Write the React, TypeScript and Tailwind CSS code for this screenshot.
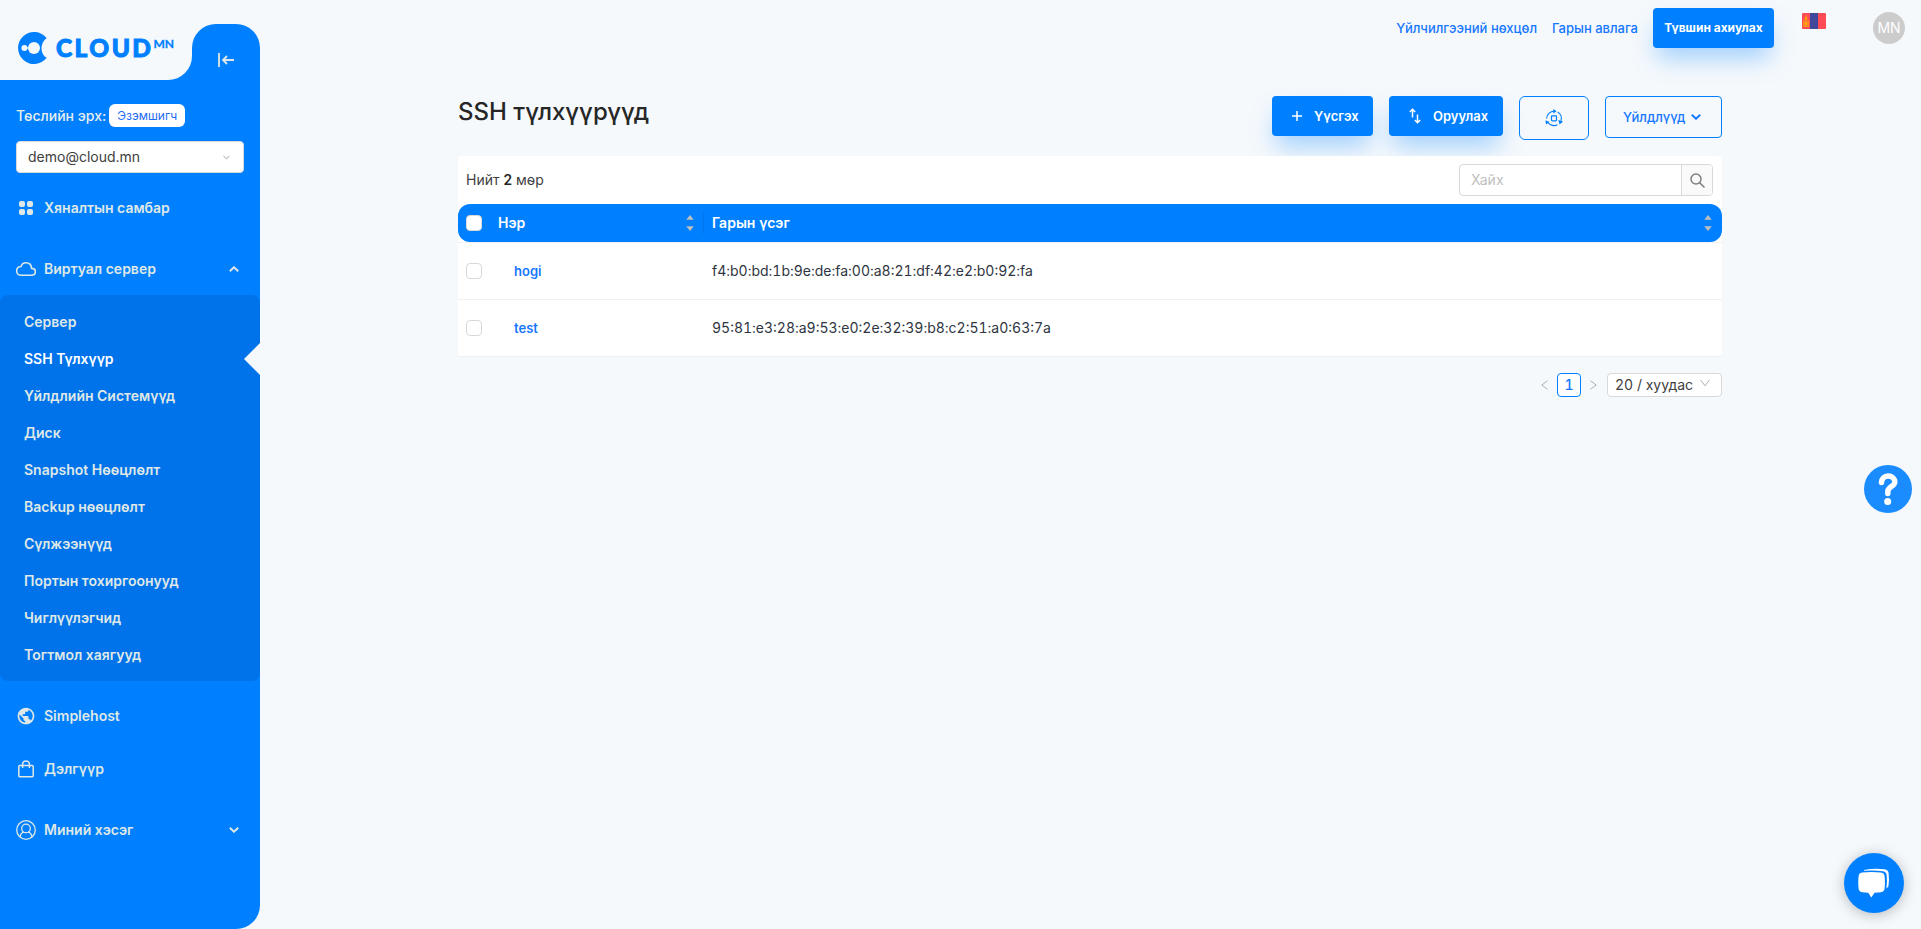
import React from 'react';
import { IoCloudOutline } from 'react-icons/io5';
import { MdPublic } from 'react-icons/md';

const INTER = "font-['Inter','Noto_Sans',sans-serif]";

function Logo() {
  return (
    <div className="flex h-8 items-center text-[#0080ff]">
      <svg width="30" height="32" viewBox="0 0 30 32" fill="none">
        <path
          d="M28.7 6.2A16 16 0 1 0 28.7 25.8L27 24.800A12.500 12.500 0 0 1 27 7.500Z"
          fill="#0080ff"
        />
        <circle cx="16" cy="16" r="6" fill="#f5f9fc" />
        <circle cx="6.4" cy="16" r="3" fill="#f5f9fc" />
        <path d="M6 16H14" stroke="#f5f9fc" strokeWidth="1.3" />
      </svg>
      <svg className="ml-[7px]" width="120" height="32" viewBox="0 0 120 32" fill="#0080ff" stroke="#0080ff">
        <text x="1" y="24.600" strokeWidth="1" fontFamily="Lato, sans-serif" fontWeight="900" fontSize="24.500" textLength="95" lengthAdjust="spacing">CLOUD</text>
        <text x="98.500" y="15.500" strokeWidth=".3" fontFamily="Lato, sans-serif" fontWeight="700" fontSize="12" textLength="20.500" lengthAdjust="spacing">MN</text>
      </svg>
    </div>
  );
}

function Chevron({ up = false, className = '' }: { up?: boolean; className?: string }) {
  return (
    <svg className={className} width="10" height="6" viewBox="0 0 10 6" fill="none" stroke="currentColor" strokeWidth="1.9">
      <path d={up ? 'M.8 5.2 5 1.2 9.2 5.2' : 'M.8.8 5 4.8 9.2.8'} />
    </svg>
  );
}

const GridIcon = () => (
  <svg width="14" height="14" viewBox="0 0 14 14" fill="currentColor">
    <rect width="6" height="6" rx="2" />
    <rect x="8" width="6" height="6" rx="2" />
    <rect y="8" width="6" height="6" rx="2" />
    <rect x="8" y="8" width="6" height="6" rx="2" />
  </svg>
);

const BagIcon = () => (
  <svg width="16" height="18" viewBox="0 0 16 18" fill="none" stroke="currentColor" strokeWidth="1.5">
    <rect x=".8" y="5.6" width="14.4" height="11.2" rx="1" />
    <path d="M4.6 8V4.3a3.4 3.4 0 0 1 6.8 0V8" />
  </svg>
);

const UserIcon = () => (
  <svg width="20" height="20" viewBox="0 0 20 20" fill="none" stroke="currentColor" strokeWidth="1.3">
    <circle cx="10" cy="10" r="9.3" />
    <circle cx="10" cy="8.4" r="4.3" />
    <path d="M4 17c.5-2.700 2-4.500 4-5.100M16 17c-.5-2.700-2-4.500-4-5.100" />
  </svg>
);

const subItems = [
  'Сервер',
  'SSH Түлхүүр',
  'Үйлдлийн Системүүд',
  'Диск',
  'Snapshot Нөөцлөлт',
  'Backup нөөцлөлт',
  'Сүлжээнүүд',
  'Портын тохиргоонууд',
  'Чиглүүлэгчид',
  'Тогтмол хаягууд',
];

function MenuItem({ icon, label, chevron }: { icon: React.ReactNode; label: string; chevron?: 'up' | 'down' }) {
  return (
    <div className="flex h-[53px] items-center pl-4 pr-[21px] text-sm font-semibold text-[#dfe8e6]">
      <span className="flex w-5 justify-center">{icon}</span>
      <span className="ml-2 flex-1">{label}</span>
      {chevron && <Chevron up={chevron === 'up'} />}
    </div>
  );
}

function Sidebar() {
  return (
    <aside className="flex h-[929px] w-[260px] shrink-0 flex-col overflow-hidden rounded-br-3xl">
      <div className="flex h-20 bg-[linear-gradient(to_bottom,#f5f9fc_50%,#0080ff_50%)]">
        <div className="flex w-48 items-start rounded-br-3xl bg-[#f5f9fc] pl-[18px] pt-8">
          <Logo />
        </div>
        <div className="flex flex-1 bg-[#f5f9fc] pt-6">
          <div className="flex flex-1 justify-center rounded-t-3xl bg-[#0080ff] pt-[29px]">
            <svg width="16" height="14" viewBox="0 0 16 14" fill="none" stroke="#dfe8e6" strokeWidth="1.8">
              <path d="M1 0V14M16 7H5M9 3 5 7l4 4" />
            </svg>
          </div>
        </div>
      </div>
      <div className="flex flex-1 flex-col bg-[#0080ff]">
        <div className="mt-6 flex h-[23px] items-center pl-4 text-sm font-medium text-[#e6efee]">
          <span>Төслийн эрх:</span>
          <span className="ml-[3px] flex h-[23px] w-[76px] items-center justify-center rounded-md bg-white text-xs font-normal text-[#1f6df5]">
            Эзэмшигч
          </span>
        </div>
        <div className="mx-4 mt-3.5 flex h-8 items-center justify-between rounded border border-[#d9d9d9] bg-white pl-[11px] pr-[13px] text-sm text-[#404040]">
          <span>demo@cloud.mn</span>
          <svg width="7" height="5" viewBox="0 0 7 5" fill="none" stroke="#bfbfbf" strokeWidth="1.1">
            <path d="M.5.8l3 3 3-3" />
          </svg>
        </div>
        <div className="mt-2">
          <MenuItem icon={<GridIcon />} label="Хяналтын самбар" />
          <div className="mt-2">
            <MenuItem icon={<IoCloudOutline size={20} className="[&_path]:[stroke-width:42px]" />} label="Виртуал сервер" chevron="up" />
          </div>
        </div>
        <div className="flex h-[386px] flex-col rounded-lg bg-[#0073eb] pt-2">
          {subItems.map((t) => {
            const active = t === 'SSH Түлхүүр';
            return (
              <div
                key={t}
                className={`flex h-[37px] items-center justify-between pl-6 text-sm font-semibold ${active ? 'text-white' : 'text-[#dfe8e6]'}`}
              >
                {t}
                {active && (
                  <svg width="16" height="32" viewBox="0 0 16 32" fill="#f5f9fc">
                    <path d="M16 0V32L0 16Z" />
                  </svg>
                )}
              </div>
            );
          })}
        </div>
        <div className="mt-2">
          <MenuItem icon={<MdPublic size={20} />} label="Simplehost" />
          <MenuItem icon={<BagIcon />} label="Дэлгүүр" />
          <div className="mt-2">
            <MenuItem icon={<UserIcon />} label="Миний хэсэг" chevron="down" />
          </div>
        </div>
      </div>
    </aside>
  );
}

function Header() {
  return (
    <header className="flex h-14 items-start justify-end pr-4 text-[13px] font-medium text-[#1677ff]">
      <a className="mr-[15px] mt-[18px] leading-5">Үйлчилгээний нөхцөл</a>
      <a className="mr-[15px] mt-[18px] leading-5">Гарын авлага</a>
      <button className="mt-2 flex h-10 w-[121px] items-center justify-center rounded bg-[#0080ff] text-xs font-bold text-white shadow-[0_14px_24px_-4px_rgba(0,128,255,0.35)]">
        Түвшин ахиулах
      </button>
      <svg className="ml-7 mt-[13px]" width="24" height="16" viewBox="0 0 24 16">
        <rect width="24" height="16" rx="1" fill="#ff4b55" />
        <rect x="8" width="8" height="16" fill="#41479b" />
        <g fill="#ffb400">
          <rect x="1.300" y="7.500" width="1.200" height="6.500" />
          <rect x="5.500" y="7.500" width="1.200" height="6.500" />
          <path d="M3 7.500h2v1H3zM3 9.300h2v3H3zM3 13h2v1H3z" />
          <circle cx="4" cy="5.600" r="1.300" />
          <path d="M4 2l.8 1.700H3.200z" />
        </g>
      </svg>
      <div className="ml-[47px] mt-3 flex size-8 items-center justify-center rounded-full bg-[#ccc] text-sm font-normal text-white">MN</div>
    </header>
  );
}

function Sorter() {
  return (
    <svg width="8" height="16" viewBox="0 0 8 16" fill="#bfbfbf">
      <path d="M4 0 7.700 4.800H.3zM4 16 .3 11.200h7.400z" />
    </svg>
  );
}

const Checkbox = () => <span className="size-4 shrink-0 rounded border border-[#d9d9d9] bg-white" />;

const keys = [
  { name: 'hogi', print: 'f4:b0:bd:1b:9e:de:fa:00:a8:21:df:42:e2:b0:92:fa' },
  { name: 'test', print: '95:81:e3:28:a9:53:e0:2e:32:39:b8:c2:51:a0:63:7a' },
];

function RefreshIcon() {
  return (
    <svg width="18" height="18" viewBox="0 0 18 18" fill="none" stroke="#0080ff" strokeWidth="1.2">
      <rect x="6.500" y="6.900" width="5" height="5" rx=".8" />
      <path d="M1.600 9.500A7.400 7.400 0 0 1 9.800 2.300M12.600 3A7.400 7.400 0 0 1 16 11.800M12.500 15.800A7.400 7.400 0 0 1 3 13.500" />
      <path d="M8.300 0 11.500 2.300 8.300 4.600ZM13.300 11 18 12.500 14.600 15.500ZM1 15.500.5 11.300 4.600 13Z" fill="#0080ff" stroke="none" />
    </svg>
  );
}

function Toolbar() {
  const primary =
    'flex h-10 items-center rounded bg-[#0080ff] text-[13px] font-semibold text-white shadow-[0_14px_24px_-4px_rgba(0,128,255,0.35)]';
  return (
    <div className="flex items-start gap-4">
      <button className={`${primary} w-[101px] pl-5`}>
        <svg width="10" height="10" viewBox="0 0 10 10" stroke="#fff" strokeWidth="1.500">
          <path d="M5 0V10M0 5H10" />
        </svg>
        <span className="ml-3">Үүсгэх</span>
      </button>
      <button className={`${primary} w-[114px] pl-5`}>
        <svg width="12" height="16" viewBox="0 0 12 16" fill="none" stroke="#fff" strokeWidth="1.500">
          <path d="M3.500 9.500V1.500M.8 4l2.700-2.700L6.200 4M8.500 6.500v8M5.800 12l2.700 2.700L11.200 12" />
        </svg>
        <span className="ml-3">Оруулах</span>
      </button>
      <button className="flex h-11 w-[70px] items-center justify-center rounded-md border border-[#0080ff]">
        <RefreshIcon />
      </button>
      <button className="flex h-[42px] w-[117px] items-center rounded border border-[#0080ff] pl-[17px] text-[13px] font-medium text-[#1677ff]">
        Үйлдлүүд
        <Chevron className="ml-1.5" />
      </button>
    </div>
  );
}

function Main() {
  return (
    <main className="mt-10 ml-[198px] w-[1264px] text-sm">
      <div className="flex h-[60px] justify-between">
        <h1 className="text-2xl font-medium leading-8 text-[#262626]">SSH түлхүүрүүд</h1>
        <Toolbar />
      </div>
      <section className="relative rounded bg-white tabular-nums">
        <div className="flex h-12 items-center justify-between pl-2 pr-[9px] text-[#404040]">
          <span>
            Нийт <b className="font-semibold text-[#262626]">2</b> мөр
          </span>
          <div className="flex h-8 w-[254px] overflow-hidden rounded border border-[#d9d9d9]">
            <span className="flex flex-1 items-center pl-[11px] text-[#bfbfbf]">Хайх</span>
            <span className="flex w-[31px] items-center justify-center border-l border-[#d9d9d9] bg-[#fafafa]">
              <svg width="15" height="15" viewBox="0 0 15 15" fill="none" stroke="#808080" strokeWidth="1.500">
                <circle cx="6" cy="6" r="5" />
                <path d="M9.600 9.600 14.500 14.500" />
              </svg>
            </span>
          </div>
        </div>
        <div className="border-b border-[#f0f0f0]">
          <div className="flex h-[38px] items-center rounded-xl bg-[#0080ff] pl-2 pr-2.5 font-semibold text-white">
            <Checkbox />
            <div className="ml-4 flex w-[205px] items-center justify-between pr-[9px]">
              Нэр
              <Sorter />
            </div>
            <div className="h-[22px] w-px bg-[#0077ee]" />
            <div className="ml-2 flex flex-1 items-center justify-between">
              Гарын үсэг
              <Sorter />
            </div>
          </div>
        </div>
        {keys.map((k) => (
          <div key={k.name} className="flex h-[57px] items-center border-b border-[#f0f0f0] pl-2 text-[#2f3542]">
            <Checkbox />
            <span className="ml-8 w-[198px] text-[13px] font-semibold text-[#1677ff]">{k.name}</span>
            <span>{k.print}</span>
          </div>
        ))}
      </section>
      <div className="mt-4 flex h-6 items-center justify-end text-[#404040] tabular-nums">
        <svg width="7" height="10" viewBox="0 0 7 10" fill="none" stroke="#b0b0b0">
          <path d="M6.500.8.800 5l5.700 4.200" />
        </svg>
        <span className="mx-[9px] flex size-6 items-center justify-center rounded border border-[#0080ff] bg-white font-medium text-[#1677ff]">1</span>
        <svg width="7" height="10" viewBox="0 0 7 10" fill="none" stroke="#b0b0b0">
          <path d="M.5.8 6.200 5 .5 9.200" />
        </svg>
        <span className="ml-2.5 flex h-6 w-[115px] items-center justify-between rounded border border-[#d9d9d9] bg-white pl-[7px] pr-[11px]">
          20 / хуудас
          <svg className="-mt-1" width="10" height="8" viewBox="0 0 10 8" fill="none" stroke="#b0b0b0">
            <path d="M.5.8 5 6.800 9.500.8" />
          </svg>
        </span>
      </div>
    </main>
  );
}

export default function App() {
  return (
    <div className={`flex h-[929px] w-full overflow-hidden bg-[#f5f9fc] ${INTER}`}>
      <Sidebar />
      <div className="flex-1">
        <Header />
        <Main />
      </div>
      <button className="fixed right-[9px] top-[465px] flex size-12 items-center justify-center rounded-full bg-[#1a8cff]">
        <svg width="20" height="32" viewBox="0 0 20 32" fill="none" stroke="#fff" strokeWidth="5.500" strokeLinecap="round">
          <path d="M3.500 9.500C3.800 5.500 6.500 3 10 3c4 0 6.800 2.600 6.800 6 0 4.500-7 4.700-7 9.500V20.500" />
          <circle cx="9.700" cy="28.500" r="3.500" fill="#fff" stroke="none" />
        </svg>
      </button>
      <button className="fixed right-[17px] top-[853px] flex size-[60px] items-center justify-center rounded-full bg-[#0080ff] shadow-[0_2px_14px_rgba(0,0,0,0.25)]">
        <svg width="32" height="30" viewBox="0 0 32 30" fill="#fff">
          <path d="M4 4.600Q13.500 3.400 23 4.600 26.200 5 26.600 8.200 27.300 14 26.600 20.500 26.200 23.800 23 24.200L16.500 24.700 13.300 29.500 10.200 24.700 4 24.200Q1 23.800.6 20.500-.1 14 .6 8.200 1 5 4 4.600Z" />
          <path d="M6 2Q16 0 26.500 1.200 30.200 1.600 30.600 5 31.500 12 30.400 18.500L28.400 20.500Q29.500 13 28.600 7 28.200 3.800 25 3.300 16 2 6 2.800Z" />
        </svg>
      </button>
    </div>
  );
}
